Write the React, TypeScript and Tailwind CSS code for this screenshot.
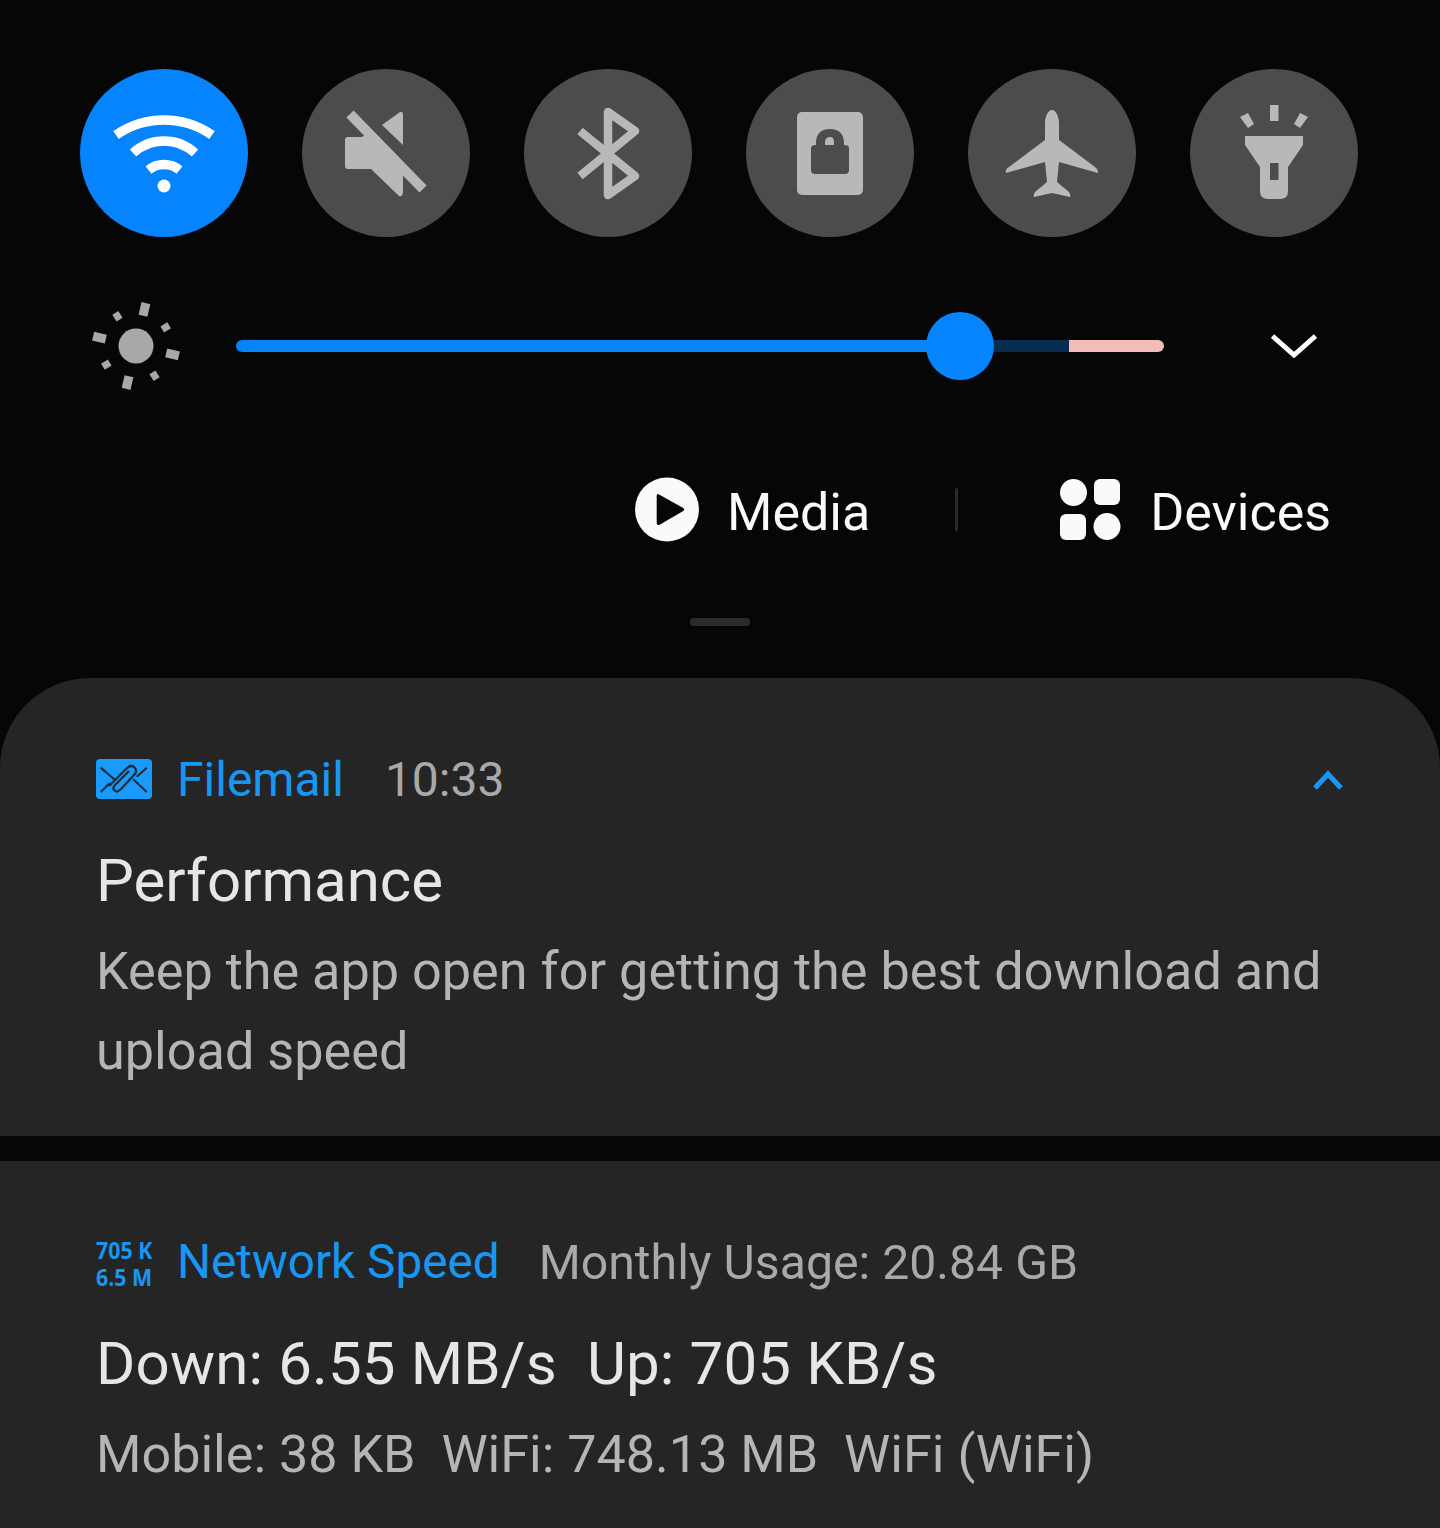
const ICON_GREY = "#b8b8b8"

function QuickButton({ active, children }: { active?: boolean; children: React.ReactNode }) {
  return (
    <div className={active ? "h-[168px] w-[168px] rounded-full bg-[#0584fe]" : "h-[168px] w-[168px] rounded-full bg-[#4c4c4c]"}>
      <svg viewBox="0 0 168 168" className="h-full w-full">
        {children}
      </svg>
    </div>
  )
}

function SunIcon() {
  const big = [13, 103, 193, 283]
  const small = [-32, 58, 148, 238]
  return (
    <svg viewBox="-44 -44 88 88" className="h-[88px] w-[88px] shrink-0">
      <circle r="17.5" fill="#a8a8a8" />
      {big.map((a) => (
        <rect key={a} x="-4.5" y="-44" width="9" height="13" fill="#a8a8a8" transform={`rotate(${a})`} />
      ))}
      {small.map((a) => (
        <rect key={a} x="-3.5" y="-39" width="7" height="8" fill="#a8a8a8" transform={`rotate(${a})`} />
      ))}
    </svg>
  )
}

function FilemailIcon() {
  return (
    <svg viewBox="0 0 56 40" className="h-[40px] w-[56px] shrink-0">
      <rect width="56" height="40" rx="4" fill="#1a9bfb" />
      <path d="M4.7 8.7 L19 21 M4.7 33 L14 24 M50.7 8.7 L40.7 17.7 M50.7 33 L37 20" stroke="#1c2f3f" strokeWidth="2.2" fill="none" />
      <path d="M13 27 L31 9 Q35 5 38.5 8.5 Q42 12 38 16 L25 30 Q21 34 18.5 31.5 Q16 29 19.5 25.5 L33 12" stroke="#1c2f3f" strokeWidth="2.4" fill="none" />
    </svg>
  )
}

export default function App() {
  return (
    <div className="flex h-[1528px] w-[1440px] flex-col overflow-hidden bg-[#060607] font-['Roboto',sans-serif]">
      <div className="flex gap-[54px] pl-[80px] pt-[69px]">
        <QuickButton active>
          <g fill="none" stroke="#ffffff" strokeWidth="9.5">
            <path d="M36 66 A84 84 0 0 1 132 66" />
            <path d="M53 84 A46 46 0 0 1 115 84" />
            <path d="M68.5 101 A25 25 0 0 1 99.5 101" />
          </g>
          <circle cx="84" cy="117" r="6.5" fill="#ffffff" />
        </QuickButton>
        <QuickButton>
          <path d="M46 68 H60 L66 64 L101 100 V124 Q100 128 97 127 L69 100 H46 Q43 100 43 97 V71 Q43 68 46 68 Z" fill={ICON_GREY} />
          <path d="M48 45 L121 120" stroke={ICON_GREY} strokeWidth="10" />
          <path d="M80 56 L98 43 Q101 42 101 46 V76 Z" fill={ICON_GREY} />
        </QuickButton>
        <QuickButton>
          <path d="M56 62 L111 107 L84 126 V43 L111 62 L56 107" fill="none" stroke={ICON_GREY} strokeWidth="8.5" strokeLinejoin="round" />
        </QuickButton>
        <QuickButton>
          <rect x="51" y="43" width="66" height="83" rx="5" fill={ICON_GREY} />
          <path d="M65 79 Q65 76 70 76 V74 C70 64 76 60 84 60 C92 60 98 64 98 74 V76 Q103 76 103 79 V101 Q103 105 99 105 H69 Q65 105 65 101 Z" fill="#4c4c4c" />
          <path d="M79 76 V74 C79 70 81 68 84 68 C87 68 88 70 88 74 V76 Z" fill={ICON_GREY} />
        </QuickButton>
        <QuickButton>
          <path
            d="M84 41 C88 41 91 48 91 54 V71 L127 98 Q130 100 130 104 L91 93 L89 113 L101 123 Q103 126 102 128 L84 124 L66 128 Q65 126 67 123 L79 113 L77 93 L38 104 Q37 100 41 98 L77 71 V54 C77 48 80 41 84 41 Z"
            fill={ICON_GREY}
          />
        </QuickButton>
        <QuickButton>
          <rect x="80" y="36" width="8.5" height="16" fill={ICON_GREY} />
          <path d="M50 48 L58 44 L64 55 L58 59 Z M118 48 L110 44 L104 55 L110 59 Z" fill={ICON_GREY} />
          <path d="M55 67 H113 V76 L98 98 V122 Q98 130 90 130 H78 Q70 130 70 122 V98 L55 76 Z" fill={ICON_GREY} />
          <rect x="80" y="94" width="8.5" height="17" fill="#4c4c4c" />
        </QuickButton>
      </div>

      <div className="mt-[75px] flex h-[68px] items-center pl-[92px]">
        <SunIcon />
        <div className="relative ml-[56px] h-[12px] w-[928px]">
          <div className="flex h-full w-full overflow-hidden rounded-full">
            <div className="h-full w-[724px] bg-[#0584fe]" />
            <div className="h-full w-[109px] bg-[#082c50]" />
            <div className="h-full flex-1 bg-[#f4bcb9]" />
          </div>
          <div className="absolute left-[690px] top-[-28px] h-[68px] w-[68px] rounded-full bg-[#0584fe]" />
        </div>
        <svg viewBox="0 0 46 24" className="ml-[107px] h-[24px] w-[46px]">
          <path d="M1.5 2 L23 21 L44.5 2" fill="none" stroke="#ffffff" strokeWidth="5" />
        </svg>
      </div>

      <div className="flex items-center pl-[635px] pt-[97px]">
        <svg viewBox="0 0 65 65" className="h-[65px] w-[64px]">
          <circle cx="32.5" cy="32.5" r="32.5" fill="#fafafa" />
          <path d="M24 17 Q22 16 22 19 V46 Q22 49 25 48 L49 34 Q51 32.5 49 31 Z" fill="#060607" />
        </svg>
        <span className="ml-[28px] mt-[6px] text-[52px] leading-none text-[#fafafa]">Media</span>
        <div className="ml-[85px] h-[43px] w-[3px] rounded-full bg-[#2a2a2a]" />
        <svg viewBox="0 0 61 61" className="ml-[102px] h-[61px] w-[61px]">
          <circle cx="13.5" cy="13.5" r="13.5" fill="#fafafa" />
          <rect x="34" y="0" width="26" height="26" rx="6" fill="#fafafa" />
          <rect x="0" y="35" width="26" height="26" rx="6" fill="#fafafa" />
          <circle cx="47" cy="47.5" r="13.5" fill="#fafafa" />
        </svg>
        <span className="ml-[29px] mt-[6px] text-[52px] leading-none text-[#fafafa]">Devices</span>
      </div>

      <div className="ml-[690px] mt-[76px] h-[8px] w-[60px] rounded-full bg-[#2b2b2b]" />

      <div className="mt-[52px] h-[458px] shrink-0 rounded-t-[90px] bg-[#252525] pl-[96px] pr-[97px] pt-[71px]">
        <div className="flex h-[60px] items-center">
          <FilemailIcon />
          <span className="ml-[25px] mt-[2px] text-[48px] leading-none text-[#1797f3]">Filemail</span>
          <span className="ml-[41px] mt-[2px] text-[48px] leading-none text-[#a9a9a9]">10:33</span>
          <svg viewBox="0 0 30 20" className="ml-auto mt-[2px] h-[20px] w-[30px]">
            <path d="M2 18 L15 4 L28 18" fill="none" stroke="#1797f3" strokeWidth="5" />
          </svg>
        </div>
        <div className="mt-[40px] text-[60px] leading-[64px] text-[#e6e6e6]">Performance</div>
        <div className="mt-[19px] text-[52.2px] leading-[80px] text-[#b5b5b5]">Keep the app open for getting the best download and upload speed</div>
      </div>

      <div className="mt-[25px] flex-1 bg-[#252525] pl-[96px] pt-[71px]">
        <div className="flex h-[60px] items-center">
          <div className="mt-[2px] w-[56px] font-['Open_Sans',sans-serif] text-[24px] font-bold leading-[27px]">
            <div className="origin-left scale-x-[0.89] whitespace-nowrap text-[#1797f3]">705 K</div>
            <div className="origin-left scale-x-[0.89] whitespace-nowrap text-[#1797f3]">6.5 M</div>
          </div>
          <span className="ml-[25px] mt-[2px] text-[47.7px] leading-none text-[#1797f3]">Network Speed</span>
          <span className="ml-[39px] mt-[2px] text-[48.2px] leading-none text-[#a9a9a9]">Monthly Usage: 20.84 GB</span>
        </div>
        <div className="mt-[40px] text-[60px] leading-[64px] tracking-[0.15px] text-[#e6e6e6]">Down: 6.55 MB/s&nbsp; Up: 705 KB/s</div>
        <div className="mt-[19px] text-[52.1px] leading-[80px] text-[#b5b5b5]">Mobile: 38 KB&nbsp; WiFi: 748.13 MB&nbsp; WiFi (WiFi)</div>
      </div>
    </div>
  )
}
